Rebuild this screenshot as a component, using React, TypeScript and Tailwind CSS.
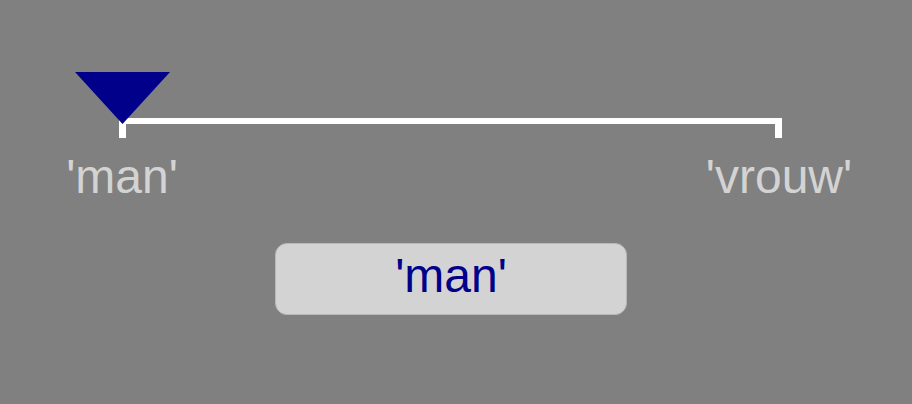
export default function App() {
  return (
    <div
      className="h-[404px] w-[912px] overflow-hidden bg-[#808080] pt-[72px]"
      style={{ fontFamily: '"Liberation Sans", Arial, sans-serif' }}
    >
      <div className="relative ml-[119px] w-[663px] pt-[46px]">
        {/* thumb */}
        <svg
          className="absolute left-[-44px] top-0"
          width="95"
          height="52"
          viewBox="0 0 95 52"
        >
          <polygon points="0,0 95,0 47.5,52" fill="#00008b" />
        </svg>

        {/* track with end ticks */}
        <div className="h-[20px] border-x-[7px] border-t-[6px] border-white" />

        <div className="mt-[15px] flex justify-between px-[3px] text-[48px] leading-none text-[#d3d3d3]">
          <div className="flex w-0 justify-center whitespace-nowrap">'man'</div>
          <div className="flex w-0 justify-center whitespace-nowrap">'vrouw'</div>
        </div>

        <div className="ml-[156px] mt-[42px] flex h-[72px] w-[352px] justify-center rounded-[12px] border border-[#b8b8b8] bg-[#d3d3d3] pt-[8px] text-[48px] leading-none text-[#00008b]">
          'man'
        </div>
      </div>
    </div>
  );
}
